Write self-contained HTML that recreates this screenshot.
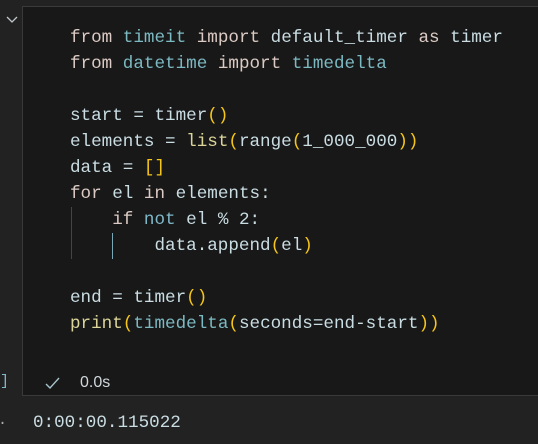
<!DOCTYPE html>
<html><head><meta charset="utf-8"><style>
body{margin:0;width:538px;height:444px;background:#222222;overflow:hidden;position:relative;font-family:"Liberation Mono",monospace}
.cell{position:absolute;left:22px;top:6px;width:530px;height:390px;background:#181818;border:1px solid #3a3a3a;box-sizing:border-box}
.code{position:absolute;left:70px;top:25px;font-size:17.6px;line-height:26px;color:#c9dde3;white-space:pre}
.k{color:#dccbc4}.m{color:#7cb9c2}.p{color:#f5c518}.f{color:#dcd59a}.n{color:#7fb8c8}
.guide{position:absolute;width:1px;background:#444}
</style></head><body>
<div class="cell"></div>
<svg style="position:absolute;left:5px;top:14px" width="14" height="10"><path d="M2 3 L7 8 L12 3" stroke="#c0c8cc" stroke-width="1.3" fill="none"/></svg>
<div class="guide" style="left:71px;top:207px;height:52px"></div>
<div class="guide" style="left:112px;top:233px;height:26px;background:#7aa8b8"></div>
<div class="code"><span class="k">from</span> <span class="m">timeit</span> <span class="k">import</span> default_timer <span class="k">as</span> timer
<span class="k">from</span> <span class="m">datetime</span> <span class="k">import</span> <span class="m">timedelta</span>

start = timer<span class="p">()</span>
elements = <span class="f">list</span><span class="p">(</span>range<span class="p">(</span>1_000_000<span class="p">))</span>
data = <span class="p">[]</span>
<span class="k">for</span> el <span class="k">in</span> elements:
    <span class="k">if</span> <span class="n">not</span> el % 2:
        data.append<span class="p">(</span>el<span class="p">)</span>

end = timer<span class="p">()</span>
<span class="f">print</span><span class="p">(</span><span class="m">timedelta</span><span class="p">(</span>seconds=end-start<span class="p">))</span></div>
<svg style="position:absolute;left:44px;top:375px" width="18" height="16"><path d="M2 9 L6 13 L15 3" stroke="#a8c4cc" stroke-width="1.4" fill="none"/></svg>
<div style="position:absolute;left:80px;top:374px;font:16px 'Liberation Sans',sans-serif;color:#d0d8dc">0.0s</div>
<div style="position:absolute;left:0px;top:373px;font-size:15px;color:#7fb8c8">]</div>
<div style="position:absolute;left:-2px;top:412px;font-size:15px;color:#aaa">.</div>
<div style="position:absolute;left:33px;top:413px;font-size:17.6px;color:#c9dde3">0:00:00.115022</div>
</body></html>
